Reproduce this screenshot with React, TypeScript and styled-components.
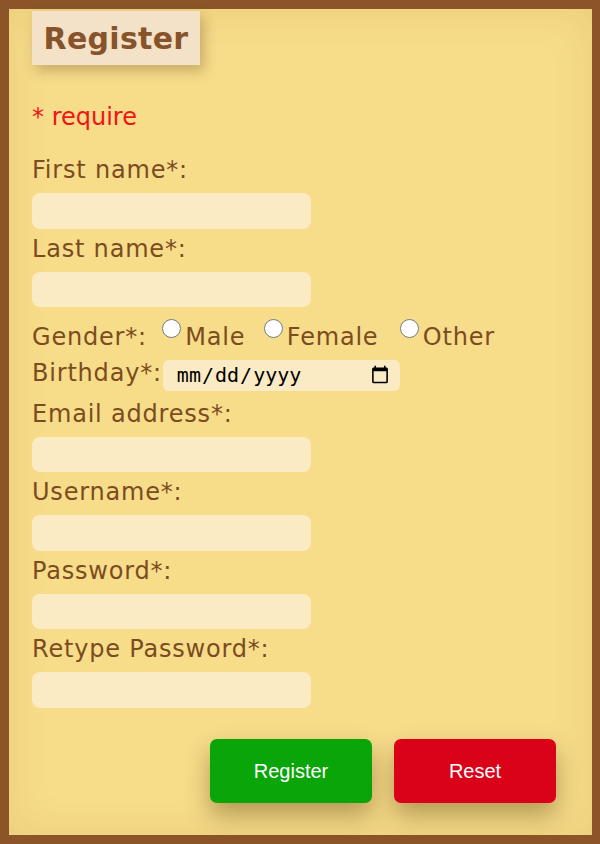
import React from 'react';
import styled, { createGlobalStyle } from 'styled-components';

const GlobalStyle = createGlobalStyle`
  html, body {
    margin: 0;
    padding: 0;
    background: #8b5527;
  }
  * {
    box-sizing: border-box;
  }
`;

const Frame = styled.div`
  width: 600px;
  height: 844px;
  border: 9px solid #8b5527;
  border-right-width: 8px;
  background: #f7dc8a;
  box-shadow: inset 0 0 40px rgba(150, 100, 20, 0.12);
  display: flex;
  flex-direction: column;
  padding: 2px 0 0 23px;
  font-family: 'DejaVu Sans', 'Open Sans', sans-serif;
  letter-spacing: 0.8px;
  color: #7b4c20;
`;

const Title = styled.h1`
  margin: 0;
  width: 168px;
  height: 54px;
  background: #f3e1c8;
  box-shadow: 4px 6px 12px rgba(90, 60, 20, 0.3);
  color: #86532a;
  font-size: 30px;
  font-weight: 700;
  display: flex;
  align-items: center;
  justify-content: center;
  letter-spacing: 0.3px;
`;

const Required = styled.p`
  margin: 34px 0 15px;
  line-height: 36px;
  font-size: 24px;
  color: #f01515;
  height: 36px;
  letter-spacing: 0;
`;

const Label = styled.label<{ top?: number }>`
  display: block;
  margin-top: ${(props) => props.top ?? 0}px;
  padding-top: 2px;
  margin-bottom: 5px;
  line-height: 36px;
  height: 38px;
  font-size: 24px;
`;

const TextInput = styled.input`
  display: block;
  width: 279px;
  height: 35.5px;
  border: none;
  border-radius: 8px;
  background: #faebc4;
  outline: none;
  padding: 0 10px;
`;

const InlineRow = styled.div<{ top?: number }>`
  margin-top: ${(props) => props.top ?? 0}px;
  height: 36px;
  line-height: 36px;
  font-size: 24px;
  white-space: nowrap;
`;

const Radio = styled.input<{ gapLeft?: number }>`
  width: 19px;
  height: 19px;
  margin: 0 4px 0 ${(props) => props.gapLeft ?? 7}px;
  vertical-align: top;
`;

const DateInput = styled.input`
  display: inline-block;
  vertical-align: top;
  margin: 5px 0 0 1px;
  width: 237px;
  height: 31px;
  border: none;
  border-radius: 6px;
  background: #faebc4;
  padding: 0 8px 0 13px;
  font-family: 'DejaVu Sans Mono', 'Liberation Mono', monospace;
  font-size: 20px;
  letter-spacing: 0;
  color: #000;
  outline: none;
`;

const ButtonRow = styled.div`
  margin-top: 31.5px;
  display: flex;
  justify-content: flex-end;
  gap: 22px;
  padding-right: 36px;
`;

const ActionButton = styled.button<{ bkg: string }>`
  width: 162px;
  height: 64px;
  border: none;
  border-radius: 7px;
  background: ${(props) => props.bkg};
  color: #fff;
  font-family: 'Liberation Sans', Arial, sans-serif;
  font-size: 20px;
  box-shadow: 0 12px 24px rgba(80, 55, 10, 0.4);
  cursor: pointer;
`;

const fields = [
  { id: 'email', label: 'Email address*:', type: 'email', top: 3 },
  { id: 'username', label: 'Username*:', type: 'text', top: 0 },
  { id: 'password', label: 'Password*:', type: 'password', top: 0 },
  { id: 'retype', label: 'Retype Password*:', type: 'password', top: 0 },
];

const App = () => {
  return (
    <>
      <GlobalStyle />
      <Frame>
        <Title>Register</Title>
        <Required>* require</Required>

        <Label htmlFor="first">First name*:</Label>
        <TextInput id="first" type="text" />
        <Label htmlFor="last">Last name*:</Label>
        <TextInput id="last" type="text" />

        <InlineRow top={11.5}>
          Gender*: <Radio type="radio" name="gender" />
          Male <Radio type="radio" name="gender" gapLeft={10} />
          Female <Radio type="radio" name="gender" gapLeft={13} />
          Other
        </InlineRow>
        <InlineRow>
          Birthday*:
          <DateInput type="date" />
        </InlineRow>

        {fields.map((f) => (
          <React.Fragment key={f.id}>
            <Label htmlFor={f.id} top={f.top}>
              {f.label}
            </Label>
            <TextInput id={f.id} type={f.type} />
          </React.Fragment>
        ))}

        <ButtonRow>
          <ActionButton bkg="#09a509">Register</ActionButton>
          <ActionButton bkg="#da0219">Reset</ActionButton>
        </ButtonRow>
      </Frame>
    </>
  );
};

export default App;
